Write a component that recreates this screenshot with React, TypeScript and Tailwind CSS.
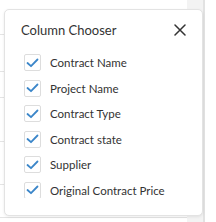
import React from "react";

const items = [
  "Contract Name",
  "Project Name",
  "Contract Type",
  "Contract state",
  "Supplier",
  "Original Contract Price",
];

const rowHeights = ["h-[35px]", "h-[37px]", "h-[26px]", "h-[44px]", "h-[43px]", "h-[33px]"];

function Check() {
  return (
    <span className="flex h-[17px] w-[17px] shrink-0 items-center justify-center rounded-[2px] border border-[#dddddd] bg-white">
      <svg width="13" height="10" viewBox="0 0 13 10" fill="none">
        <path d="M1.5 5 L5 8.2 L11.5 1.5" stroke="#3b86c9" strokeWidth="1.8" strokeLinecap="round" strokeLinejoin="round" />
      </svg>
    </span>
  );
}

export default function App() {
  return (
    <div className="relative h-[222px] w-[216px] overflow-hidden bg-white" style={{ fontFamily: 'Lato, "Open Sans", sans-serif' }}>
      {/* page behind the popup */}
      <div className="flex h-full w-full">
        <div className="flex w-[187px] flex-col">
          {rowHeights.map((h, i) => (
            <div key={i} className={`${h} shrink-0 border-b border-[#e4e4e4]`} />
          ))}
        </div>
        <div className="w-[16px] bg-[#f3f3f3]" />
        <div className="w-[2px] bg-[#e2e2e2]" />
        <div className="flex-1" />
      </div>

      {/* popup overlay */}
      <div className="absolute left-[4px] top-[9px] flex h-[207px] w-[199px] flex-col rounded-[5px] border border-[#e3e3e3] bg-white shadow-[0_1px_3px_rgba(0,0,0,0.08)]">
        <div className="mt-[8px] flex h-[24px] items-center justify-between pl-[16px] pr-[16px]">
          <span className="text-[13px] leading-none text-[#333333]">Column Chooser</span>
          <svg width="12" height="12" viewBox="0 0 12 12">
            <path d="M1 1 L11 11 M11 1 L1 11" stroke="#333333" strokeWidth="1.5" strokeLinecap="round" />
          </svg>
        </div>
        <div className="mt-[8px] h-[148px] overflow-hidden pl-[19px]">
          <div className="flex flex-col">
            {items.map((t) => (
              <div key={t} className="flex h-[25.5px] items-center gap-[9px]">
                <Check />
                <span className="text-[11.5px] leading-none text-[#333333]">{t}</span>
              </div>
            ))}
          </div>
        </div>
      </div>
    </div>
  );
}
